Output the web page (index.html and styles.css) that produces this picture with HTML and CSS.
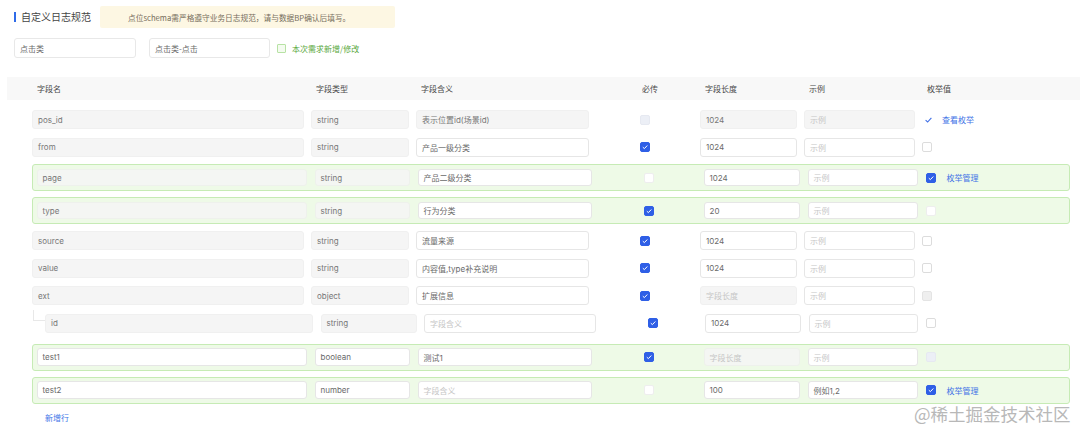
FILE: index.html
```html
<!DOCTYPE html>
<html lang="zh">
<head>
<meta charset="utf-8">
<title>自定义日志规范</title>
<link rel="stylesheet" href="styles.css">
</head>
<body>
<div class="top">
  <span class="bar"></span>
  <span class="title">自定义日志规范</span>
  <div class="notice">点位schema需严格遵守业务日志规范，请与数据BP确认后填写。</div>
</div>
<div class="filters">
  <div class="finput w1">点击类</div>
  <div class="finput w2">点击类-点击</div>
  <span class="gcheck"></span>
  <span class="glabel">本次需求新增/修改</span>
</div>

<div class="thead grid-n">
  <div class="th">字段名</div>
  <div class="th">字段类型</div>
  <div class="th">字段含义</div>
  <div class="th th-req">必传</div>
  <div class="th">字段长度</div>
  <div class="th">示例</div>
  <div class="th">枚举值</div>
</div>

<div class="rows">
  <div class="row grid-n">
    <div class="inp dis">pos_id</div>
    <div class="inp dis">string</div>
    <div class="inp dis">表示位置id(场景id)</div>
    <div class="req"><span class="cb cb-dis"></span></div>
    <div class="inp dis">1024</div>
    <div class="inp dis ph">示例</div>
    <div class="enum"><svg class="tick" width="7" height="6" viewBox="0 0 7 6"><path d="M0.6 3.2 L2.6 5 L6.4 0.8" fill="none" stroke="#3f6fe6" stroke-width="1.1"/></svg><span class="link view">查看枚举</span></div>
  </div>
  <div class="row grid-n">
    <div class="inp dis">from</div>
    <div class="inp dis">string</div>
    <div class="inp">产品一级分类</div>
    <div class="req"><span class="cb cb-on"><svg width="8" height="8" viewBox="0 0 8 8"><path d="M1.8 4.2 L3.4 5.6 L6.3 2.5" fill="none" stroke="#fff" stroke-width="1"/></svg></span></div>
    <div class="inp">1024</div>
    <div class="inp ph">示例</div>
    <div class="enum"><span class="cb"></span></div>
  </div>
  <div class="row-g grid-g">
    <div class="inp gdis">page</div>
    <div class="inp gdis">string</div>
    <div class="inp">产品二级分类</div>
    <div class="req"><span class="cb cb-w"></span></div>
    <div class="inp">1024</div>
    <div class="inp ph">示例</div>
    <div class="enum"><span class="cb cb-on"><svg width="8" height="8" viewBox="0 0 8 8"><path d="M1.8 4.2 L3.4 5.6 L6.3 2.5" fill="none" stroke="#fff" stroke-width="1"/></svg></span><span class="link">枚举管理</span></div>
  </div>
  <div class="row-g grid-g">
    <div class="inp gdis">type</div>
    <div class="inp gdis">string</div>
    <div class="inp">行为分类</div>
    <div class="req"><span class="cb cb-on"><svg width="8" height="8" viewBox="0 0 8 8"><path d="M1.8 4.2 L3.4 5.6 L6.3 2.5" fill="none" stroke="#fff" stroke-width="1"/></svg></span></div>
    <div class="inp">20</div>
    <div class="inp ph">示例</div>
    <div class="enum"><span class="cb cb-w"></span></div>
  </div>
  <div class="row grid-n">
    <div class="inp dis">source</div>
    <div class="inp dis">string</div>
    <div class="inp">流量来源</div>
    <div class="req"><span class="cb cb-on"><svg width="8" height="8" viewBox="0 0 8 8"><path d="M1.8 4.2 L3.4 5.6 L6.3 2.5" fill="none" stroke="#fff" stroke-width="1"/></svg></span></div>
    <div class="inp">1024</div>
    <div class="inp ph">示例</div>
    <div class="enum"><span class="cb"></span></div>
  </div>
  <div class="row grid-n">
    <div class="inp dis">value</div>
    <div class="inp dis">string</div>
    <div class="inp">内容值,type补充说明</div>
    <div class="req"><span class="cb cb-on"><svg width="8" height="8" viewBox="0 0 8 8"><path d="M1.8 4.2 L3.4 5.6 L6.3 2.5" fill="none" stroke="#fff" stroke-width="1"/></svg></span></div>
    <div class="inp">1024</div>
    <div class="inp ph">示例</div>
    <div class="enum"><span class="cb"></span></div>
  </div>
  <div class="row grid-n">
    <div class="inp dis">ext</div>
    <div class="inp dis">object</div>
    <div class="inp">扩展信息</div>
    <div class="req"><span class="cb cb-on"><svg width="8" height="8" viewBox="0 0 8 8"><path d="M1.8 4.2 L3.4 5.6 L6.3 2.5" fill="none" stroke="#fff" stroke-width="1"/></svg></span></div>
    <div class="inp dis ph">字段长度</div>
    <div class="inp ph">示例</div>
    <div class="enum"><span class="cb cb-gray"></span></div>
  </div>
  <div class="row-c">
    <span class="conn"></span>
    <div class="grid-c">
      <div class="inp dis">id</div>
      <div class="inp dis">string</div>
      <div class="inp ph">字段含义</div>
      <div class="req"><span class="cb cb-on"><svg width="8" height="8" viewBox="0 0 8 8"><path d="M1.8 4.2 L3.4 5.6 L6.3 2.5" fill="none" stroke="#fff" stroke-width="1"/></svg></span></div>
      <div class="inp">1024</div>
      <div class="inp ph">示例</div>
      <div class="enum"><span class="cb"></span></div>
    </div>
  </div>
  <div class="row-g grid-g">
    <div class="inp">test1</div>
    <div class="inp">boolean</div>
    <div class="inp">测试1</div>
    <div class="req"><span class="cb cb-on"><svg width="8" height="8" viewBox="0 0 8 8"><path d="M1.8 4.2 L3.4 5.6 L6.3 2.5" fill="none" stroke="#fff" stroke-width="1"/></svg></span></div>
    <div class="inp gdis ph">字段长度</div>
    <div class="inp ph">示例</div>
    <div class="enum"><span class="cb cb-dis"></span></div>
  </div>
  <div class="row-g grid-g">
    <div class="inp">test2</div>
    <div class="inp">number</div>
    <div class="inp ph">字段含义</div>
    <div class="req"><span class="cb cb-w"></span></div>
    <div class="inp">100</div>
    <div class="inp">例如1,2</div>
    <div class="enum"><span class="cb cb-on"><svg width="8" height="8" viewBox="0 0 8 8"><path d="M1.8 4.2 L3.4 5.6 L6.3 2.5" fill="none" stroke="#fff" stroke-width="1"/></svg></span><span class="link">枚举管理</span></div>
  </div>
</div>
<div class="add">新增行</div>
<div class="watermark">@稀土掘金技术社区</div>
</body>
</html>
```

FILE: styles.css
```css
html, body {
  margin: 0;
  padding: 0;
}
body {
  width: 1080px;
  height: 432px;
  overflow: hidden;
  position: relative;
  background: #ffffff;
  font-family: "Inter", "Noto Sans CJK SC", sans-serif;
  font-size: 8px;
  color: #6a6a6a;
}
.top {
  display: flex;
  align-items: center;
  height: 22px;
  margin-top: 6px;
}
.bar {
  width: 2px;
  height: 10px;
  background: #2f6be8;
  margin-left: 14px;
}
.title {
  margin-left: 5px;
  font-size: 10px;
  color: #444444;
  font-family: "Noto Sans CJK SC", sans-serif;
  line-height: 12px;
}
.notice {
  margin-left: 9px;
  width: 295px;
  height: 22px;
  box-sizing: border-box;
  background: #fdf7e3;
  border-radius: 2px;
  display: flex;
  align-items: center;
  padding-left: 28px;
  color: #766d5c;
  font-size: 7.7px;
  font-family: "Noto Sans CJK SC", sans-serif;
}
.filters {
  display: flex;
  align-items: center;
  height: 20px;
  margin-top: 10px;
  padding-left: 14px;
}
.finput {
  height: 20px;
  box-sizing: border-box;
  border: 1px solid #e8e8e8;
  border-radius: 3px;
  padding-left: 5px;
  display: flex;
  align-items: center;
  color: #6a6a6a;
  font-family: "Noto Sans CJK SC", sans-serif;
}
.w1 { width: 122px; }
.w2 { width: 121px; margin-left: 13px; }
.gcheck {
  width: 9px;
  height: 9px;
  box-sizing: border-box;
  border: 1px solid #b7e2a4;
  background: #f4fbf0;
  border-radius: 1px;
  margin-left: 7px;
}
.glabel {
  margin-left: 6px;
  color: #5aa840;
  font-family: "Noto Sans CJK SC", sans-serif;
}

.grid-n {
  display: grid;
  grid-template-columns: 272px 98px 173px 97px 97px 111px 1fr;
  column-gap: 7px;
  align-items: center;
}
.grid-g {
  display: grid;
  grid-template-columns: 270px 95px 174px 96px 96px 110px 1fr;
  column-gap: 8px;
  align-items: center;
}
.grid-c {
  display: grid;
  grid-template-columns: 268px 96px 172px 94px 96px 109.5px 1fr;
  column-gap: 7.5px;
  align-items: center;
  flex: 1;
  height: 27.5px;
}

.thead {
  margin-top: 19px;
  margin-left: 7px;
  height: 23px;
  padding-left: 25px;
  background: #f8f8f8;
  color: #4a4a4a;
  font-family: "Noto Sans CJK SC", sans-serif;
}
.th {
  padding-left: 5px;
}
.th-req {
  padding-left: 46px;
}

.rows {
  padding-top: 6px;
  display: flex;
  flex-direction: column;
}
.row {
  height: 27.5px;
  margin-left: 32px;
}
.row-g {
  height: 27px;
  box-sizing: border-box;
  margin: 3px 0 3px 32px;
  width: 1038px;
  padding-left: 3.5px;
  background: #eefae7;
  border: 1px solid #c6ebb5;
  border-radius: 3px;
}
.row-g .inp {
  height: 17.5px;
}
.row-c {
  display: flex;
  margin-left: 33px;
  margin-bottom: 3.5px;
}
.conn {
  width: 11px;
  height: 10px;
  border-left: 1px solid #e8e8e8;
  border-bottom: 1px solid #e8e8e8;
}

.inp {
  height: 19px;
  box-sizing: border-box;
  border: 1px solid #e6e6e6;
  border-radius: 3px;
  background: #ffffff;
  padding-left: 5px;
  display: flex;
  align-items: center;
  color: #6a6a6a;
  white-space: nowrap;
  overflow: hidden;
  font-family: "Inter", "Noto Sans CJK SC", sans-serif;
}
.inp.dis {
  background: #f5f5f5;
  border-color: #f0f0f0;
  color: #777777;
}
.inp.gdis {
  background: #f4f6f3;
  border-color: #eef1ec;
  color: #777777;
}
.inp.ph {
  color: #c6c6c6;
}

.req {
  display: flex;
  align-items: center;
  padding-left: 44px;
}
.cb {
  width: 10px;
  height: 10px;
  box-sizing: border-box;
  border: 1px solid #dcdcdc;
  border-radius: 2px;
  background: #ffffff;
  display: inline-flex;
  align-items: center;
  justify-content: center;
  flex: none;
}
.cb svg { display: block; }
.cb-on {
  background: #2f5fe6;
  border-color: #2f5fe6;
}
.cb-w {
  border-color: #eeeeee;
}
.cb-dis {
  background: #eceff6;
  border-color: #e6e9f1;
}
.cb-gray {
  background: #efefef;
  border-color: #e4e4e4;
}

.enum {
  display: flex;
  align-items: center;
}
.tick {
  margin-left: 3px;
  display: block;
}
.link {
  color: #4474e6;
  margin-left: 11px;
  font-family: "Noto Sans CJK SC", sans-serif;
}
.link.view {
  margin-left: 10px;
}

.add {
  margin-top: 5px;
  margin-left: 45px;
  line-height: 12px;
  color: #4477e8;
  font-family: "Noto Sans CJK SC", sans-serif;
}
.watermark {
  position: absolute;
  left: 914px;
  top: 403px;
  font-size: 17.5px;
  line-height: 22px;
  color: #b8b8b8;
  font-family: "Noto Sans CJK SC", sans-serif;
}
```
